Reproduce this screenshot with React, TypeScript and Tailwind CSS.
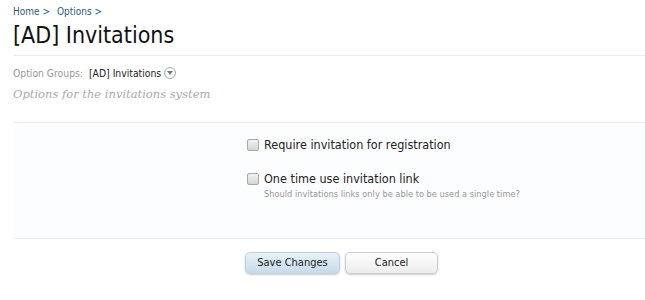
function Checkbox() {
  return (
    <input
      type="checkbox"
      className="appearance-none w-[12px] h-[12px] rounded-[2px] border border-[#a9a9a9] bg-gradient-to-b from-[#f2f2f2] to-[#d4d4d4] shrink-0"
    />
  );
}

export default function App() {
  return (
    <div className="w-[645px] h-[300px] bg-white overflow-hidden font-['DejaVu_Sans_Condensed','DejaVu_Sans',sans-serif]">
      <div className="pl-[13px] pt-[5px] text-[10px] leading-[14px] text-[#2f5a7a] flex gap-[7px]">
        <span>Home &gt;</span>
        <span>Options &gt;</span>
      </div>
      <div className="ml-[14px] border-b border-[#e3edf2] pb-[4px]">
        <h1 className="text-[23px] leading-[32px] text-[#111] -ml-[1px]">[AD] Invitations</h1>
      </div>
      <div className="ml-[13px] mt-[10px] flex items-center text-[10.3px] leading-[14px]">
        <span className="text-[#999]">Option Groups:</span>
        <span className="ml-[6px] text-[#222]">[AD] Invitations</span>
        <span className="ml-[3px] w-[12px] h-[12px] rounded-full border border-[#aaa] bg-[#fafafa] flex items-center justify-center">
          <svg width="6" height="4" viewBox="0 0 6 4">
            <path d="M0 0 L6 0 L3 4 Z" fill="#777" />
          </svg>
        </span>
      </div>
      <p className="ml-[13px] mt-[6px] text-[11.5px] leading-[16px] italic text-[#aaa] font-['DejaVu_Serif',serif]">
        Options for the invitations system
      </p>
      <form className="ml-[14px] mt-[20px] border-t border-b border-[#e3edf2] bg-[#fcfdfe] h-[117px] pl-[233px] pt-[14px]">
        <label className="flex items-center gap-[5px] text-[12.5px] leading-[16px] text-[#222]">
          <Checkbox />
          <span>Require invitation for registration</span>
        </label>
        <div className="mt-[18px]">
          <label className="flex items-center gap-[5px] text-[12.5px] leading-[16px] text-[#222]">
            <Checkbox />
            <span>One time use invitation link</span>
          </label>
          <p className="ml-[17px] text-[9.2px] leading-[14px] text-[#999]">
            Should invitations links only be able to be used a single time?
          </p>
        </div>
      </form>
      <div className="ml-[245px] mt-[13px] flex gap-[5px] text-[11px]">
        <button className="w-[95px] h-[22px] rounded-[5px] border border-[#bcd0de] bg-gradient-to-b from-[#e8f1f7] to-[#c6dbe9] text-[#222] shadow-[0_1px_2px_rgba(0,0,0,0.2)]">
          Save Changes
        </button>
        <button className="w-[93px] h-[22px] rounded-[5px] border border-[#ccc] bg-gradient-to-b from-[#fff] to-[#ececec] text-[#222] shadow-[0_1px_2px_rgba(0,0,0,0.2)]">
          Cancel
        </button>
      </div>
    </div>
  );
}
